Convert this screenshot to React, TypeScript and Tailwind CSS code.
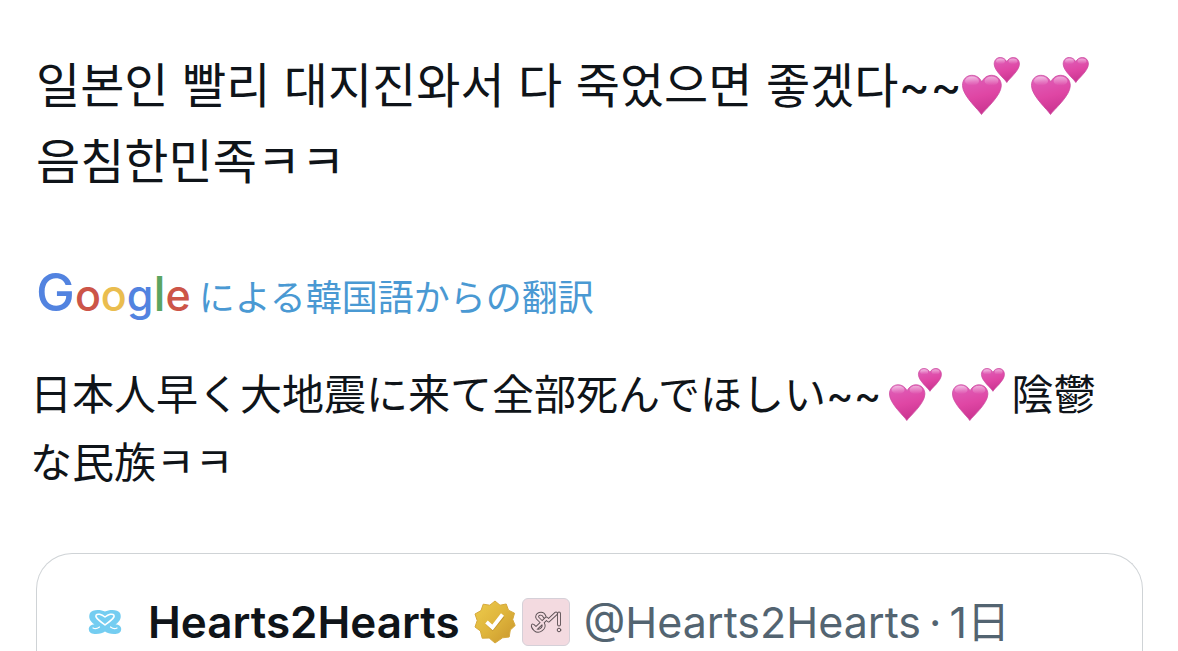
import React from "react";

function TwoHearts({ id, className }: { id: string; className: string }) {
  const main =
    "M19.5 57.5C17 53 0.5 39 0.5 28.5C0.5 22.5 4.5 18.3 9.8 18.3C14.5 18.3 17.8 21 19.8 24.8C21.8 21 25 18.3 29.7 18.3C35 18.3 39.3 22.5 39.3 28.5C39.3 39 22.5 53 19.5 57.5Z";
  const small =
    "M44.8 25.5C43 22 32.2 14 32.2 7C32.2 3.2 34.8 0.5 38.2 0.5C41.3 0.5 43.5 2.2 44.8 4.8C46.1 2.2 48.3 0.5 51.4 0.5C54.8 0.5 57.4 3.2 57.4 7C57.4 14 46.6 22 44.8 25.5Z";
  return (
    <svg viewBox="0 0 58 58" role="img" aria-label="💕" className={className}>
      <defs>
        <linearGradient id={id} x1="0" y1="0" x2="0.25" y2="1">
          <stop offset="0" stopColor="#e989d0" />
          <stop offset="0.22" stopColor="#df58b3" />
          <stop offset="0.6" stopColor="#df46a4" />
          <stop offset="1" stopColor="#cc3592" />
        </linearGradient>
        <linearGradient id={id + "-shine"} x1="0" y1="0" x2="0" y2="1">
          <stop offset="0" stopColor="#fff" stopOpacity="0.5" />
          <stop offset="1" stopColor="#fff" stopOpacity="0" />
        </linearGradient>
      </defs>
      <path d={main} fill={`url(#${id})`} stroke="#cb4a9f" strokeWidth="0.8" />
      <path d={small} fill={`url(#${id})`} stroke="#cb4a9f" strokeWidth="0.8" />
      <g fill={`url(#${id}-shine)`}>
        <ellipse cx="10" cy="24" rx="7" ry="4.5" />
        <ellipse cx="29.5" cy="24" rx="7" ry="4.5" />
        <ellipse cx="38.5" cy="4.3" rx="4.4" ry="2.8" />
        <ellipse cx="51" cy="4.3" rx="4.4" ry="2.8" />
      </g>
    </svg>
  );
}

function Avatar() {
  return (
    <svg viewBox="0 0 34 26" role="img" aria-label="Hearts2Hearts" className="w-[34px] shrink-0" fill="none">
      <path
        d="M17 2.5C13 0.3 4 0 2 4C0.2 8 1.5 12 6.5 15.5C3 15.5 0.8 17.5 0.8 20C0.8 24 4 25 8 25C12 25 15 24 17 22.5C19 24 22 25 26 25C30 25 33.2 24 33.2 20C33.2 17.5 31 15.5 27.5 15.5C32.5 12 33.8 8 32 4C30 0 21 0.3 17 2.5Z"
        fill="#74cdf1"
      />
      <path
        d="M17 8C13.5 5.2 9.5 4.2 8 6.2C6.8 8.5 10.5 11 17 16C23.5 11 27.2 8.5 26 6.2C24.5 4.2 20.5 5.2 17 8Z"
        stroke="#fff"
        strokeWidth="1.5"
        strokeLinejoin="round"
      />
      <path d="M5 19C7.5 20.5 9.5 19.5 11.5 18M29 19C26.5 20.5 24.5 19.5 22.5 18" stroke="#fff" strokeWidth="1.2" strokeLinecap="round" />
    </svg>
  );
}

function VerifiedBadge() {
  return (
    <svg viewBox="0 0 42 44" role="img" aria-label="認証済み" className="w-[42px] shrink-0">
      <defs>
        <linearGradient id="gold" x1="0" y1="0" x2="1" y2="1">
          <stop offset="0" stopColor="#edcb4c" />
          <stop offset="0.5" stopColor="#dfb53c" />
          <stop offset="1" stopColor="#c8952c" />
        </linearGradient>
      </defs>
      <path
        d="M21 1L26 5.2L32.2 4L34.5 10.2L40.5 13.2L38.7 19.5L41.2 25.5L36.3 30L35.2 37L28.6 37.8L21 43L15.2 38L8.2 38.2L6.4 31L1 27L3.2 20.5L1 14L7 10.6L9.2 4.2L15.8 5.2Z"
        fill="url(#gold)"
        stroke="#d6a93c"
        strokeWidth="1"
        strokeLinejoin="round"
      />
      <path d="M13 23L18.5 28.5L29 16" fill="none" stroke="#a9791d" strokeOpacity="0.5" strokeWidth="3.6" />
      <path d="M12.5 22L18.5 27.5L28.5 14.5" fill="none" stroke="#fff" strokeWidth="3.8" />
    </svg>
  );
}

function LabelBadge() {
  const mark =
    "M22.5 18.5C20.5 13.5 13.5 16 15.5 20L21 25.5C23.5 30 17 35 13 31.5C11.5 30 10.5 29 10.8 27.5L14 30.5L24.5 20.5L26.5 22.5L34 15.5";
  return (
    <svg viewBox="0 0 48 48" role="img" aria-label="所属" className="w-12 shrink-0">
      <rect x="0.5" y="0.5" width="47" height="47" rx="5.5" fill="#f3dae0" stroke="#d5d0d8" />
      <g fill="none" strokeLinecap="round" strokeLinejoin="round">
        <path d={mark} stroke="#5b5054" strokeWidth="3.8" />
        <path d={mark} stroke="#f3dae0" strokeWidth="2" />
        <path d="M37 15.5V26.5" stroke="#5b5054" strokeWidth="3.8" />
        <path d="M37 15.5V26.5" stroke="#f3dae0" strokeWidth="2" />
        <circle cx="37" cy="32" r="1.8" stroke="#5b5054" />
      </g>
    </svg>
  );
}

function GoogleLogo() {
  return (
    <span className="font-['Inter',sans-serif] text-[43px] leading-[60px] font-medium">
      <span className="text-[52px] text-[#5283e0]">G</span>
      <span className="text-[#cc5548]">o</span>
      <span className="text-[#eabd4f]">o</span>
      <span className="text-[#5283e0]">g</span>
      <span className="text-[48px] text-[#5ba561]">l</span>
      <span className="text-[#cc5548]">e</span>
    </span>
  );
}

export default function App() {
  return (
    <main className="flex min-h-screen flex-col overflow-hidden bg-white pt-12 pr-[35px] pl-9 text-[#0f1419]">
      <p
        lang="ko"
        className="font-['Inter','Noto_Sans_CJK_KR',sans-serif] text-[48px] leading-[76px] whitespace-nowrap"
      >
        일본인 빨리 대지진와서 다 죽었으면 좋겠다~~
        <TwoHearts id="heart-a" className="mb-2 inline-block w-[58px]" />
        <TwoHearts id="heart-b" className="mb-2 ml-[11px] inline-block w-[58px]" />
        <br />
        음침한민족ㅋㅋ
      </p>

      <a
        href="#translation"
        lang="ja"
        className="mt-[63px] flex items-baseline gap-2 font-['Inter','Noto_Sans_CJK_JP',sans-serif] text-[36px] leading-[60px] whitespace-nowrap text-[#4a99d3]"
      >
        <GoogleLogo />
        <span>による韓国語からの翻訳</span>
      </a>

      <p
        id="translation"
        lang="ja"
        className="-ml-1.5 mt-[33px] font-['Inter','Noto_Sans_CJK_JP','Noto_Sans_CJK_KR',sans-serif] text-[42px] leading-[68px] whitespace-nowrap"
      >
        日本人早く大地震に来て全部死んでほしい~~
        <TwoHearts id="heart-c" className="mb-2 ml-2 inline-block w-[53px]" />
        <TwoHearts id="heart-d" className="mr-1.5 mb-2 ml-2.5 inline-block w-[53px]" />
        陰鬱
        <br />
        な民族ㅋㅋ
      </p>

      <article className="mt-[56px] flex-1 rounded-t-[36px] border border-b-0 border-[#cfd3d6] px-[51px] pt-[38px]">
        <header className="flex items-center font-['Inter','Noto_Sans_CJK_JP',sans-serif] text-[44px] leading-[60px] whitespace-nowrap">
          <Avatar />
          <span className="ml-[26px] font-semibold">Hearts2Hearts</span>
          <span className="ml-3.5 flex items-center gap-1.5">
            <VerifiedBadge />
            <LabelBadge />
          </span>
          <span className="ml-3.5 flex gap-2 text-[43px] text-[#536471]">
            <span>@Hearts2Hearts</span>
            <span>·</span>
            <time>1日</time>
          </span>
        </header>
      </article>
    </main>
  );
}
